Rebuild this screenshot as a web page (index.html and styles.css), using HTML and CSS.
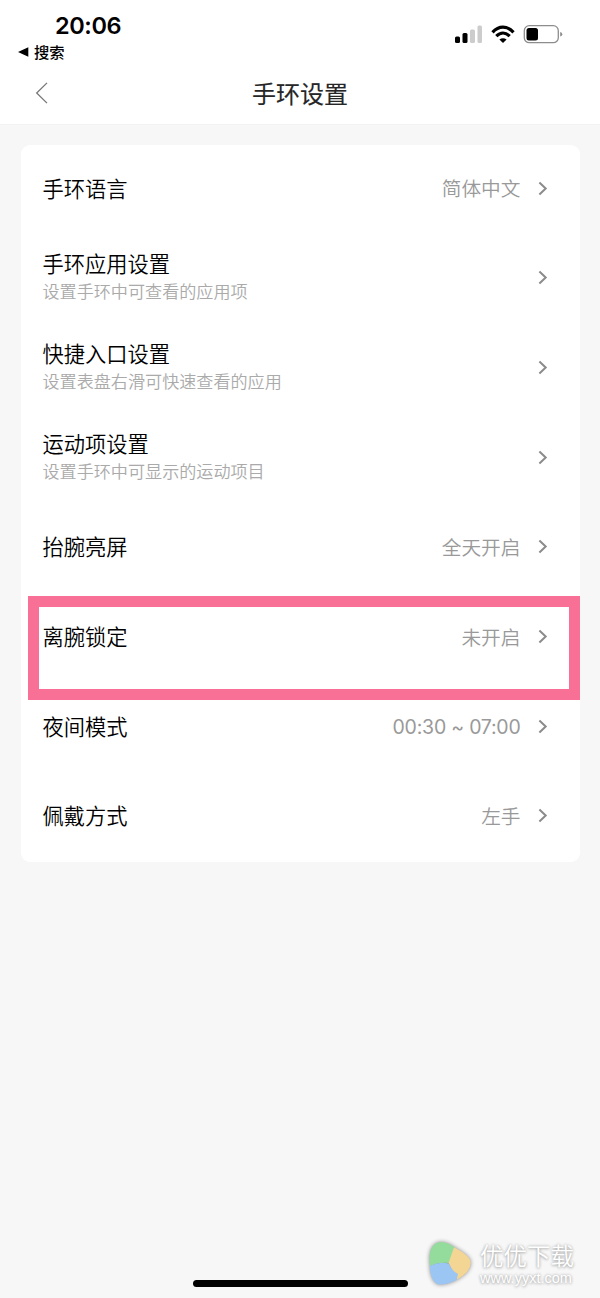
FILE: index.html
```html
<!DOCTYPE html>
<html lang="zh-CN">
<head>
<meta charset="utf-8">
<title>手环设置</title>
<link rel="stylesheet" href="styles.css">
</head>
<body>
<svg class="defs" width="0" height="0"><symbol id="chev" viewBox="0 0 10 15"><path d="M1.4 1.5 7.7 7.5 1.4 13.5" fill="none" stroke="#8b8b8b" stroke-width="2"/></symbol></svg>
<div class="screen">
  <header class="header">
    <div class="status">
      <div class="clock">
        <div class="time">20:06</div>
        <div class="return"><svg width="11" height="10" viewBox="0 0 11 10"><path d="M0 5 10.3 .3V9.7Z"/></svg><span>搜索</span></div>
      </div>
      <svg class="signals" width="110" height="22" viewBox="0 0 110 22">
        <rect x="1" y="12.500" width="5" height="6.500" rx="1.5"/>
        <rect x="8.500" y="9" width="5" height="10" rx="1.5"/>
        <rect x="16" y="5.500" width="5" height="13.500" rx="1.5" fill="#ccc"/>
        <rect x="23.500" y="1.500" width="4.500" height="17.500" rx="1.500" fill="#ccc"/>
        <g fill="none" stroke="#000" stroke-width="3.200"><path d="M38.500 8.300C44.800 1.500 53.200 1.500 59.500 8.300"/><path d="M42.300 12.200C46.500 8.100 51.500 8.100 55.700 12.200"/></g>
        <path d="M45.400 15.500Q49 12.800 52.600 15.500L49 19Z"/>
        <rect x="70.300" y="1.700" width="34" height="17" rx="5" fill="none" stroke="#8d8d8d" stroke-width="1.300"/>
        <rect x="72.500" y="4" width="11.500" height="12.500" rx="2.500"/>
        <path d="M106.200 8Q108.300 8.500 108.300 10.200T106.200 12.500Z" fill="#8d8d8d"/>
      </svg>
    </div>
    <nav class="nav">
      <svg class="back" width="14" height="24" viewBox="0 0 14 24"><path d="M12 1.900 1.700 12 12 22.100" fill="none" stroke="#777" stroke-width="1.300"/></svg>
      <h1 class="title">手环设置</h1>
    </nav>
  </header>
  <main class="card">
    <div class="row"><div class="label">手环语言</div><div class="value">简体中文</div><svg class="arrow"><use href="#chev"/></svg></div>
    <div class="row"><div class="label double">手环应用设置<p class="sub">设置手环中可查看的应用项</p></div><svg class="arrow"><use href="#chev"/></svg></div>
    <div class="row"><div class="label double">快捷入口设置<p class="sub">设置表盘右滑可快速查看的应用</p></div><svg class="arrow"><use href="#chev"/></svg></div>
    <div class="row"><div class="label double">运动项设置<p class="sub">设置手环中可显示的运动项目</p></div><svg class="arrow"><use href="#chev"/></svg></div>
    <div class="row"><div class="label">抬腕亮屏</div><div class="value">全天开启</div><svg class="arrow"><use href="#chev"/></svg></div>
    <div class="row marked"><div class="label">离腕锁定</div><div class="value">未开启</div><svg class="arrow"><use href="#chev"/></svg></div>
    <div class="row"><div class="label">夜间模式</div><div class="value hours">00:30 ~ 07:00</div><svg class="arrow"><use href="#chev"/></svg></div>
    <div class="row"><div class="label">佩戴方式</div><div class="value">左手</div><svg class="arrow"><use href="#chev"/></svg></div>
  </main>
  <div class="home"></div>
  <div class="watermark">
    <svg class="logo" width="48" height="50" viewBox="0 0 48 50">
      <path d="M4 27C2 12 6 3.500 15 3Q22 3 29.500 9L23 24Q13 23 4 27Z" fill="#93dc9b"/>
      <path d="M28 8.300Q45 17 44.700 24Q44.500 33 31 40.500L22.500 24Z" fill="#f3d594"/>
      <path d="M3.700 27Q13 22 23 24.500Q26 32 32 35L30.500 41Q20 46 13 45.500Q5 44 3.700 27Z" fill="#9bc5f2"/>
    </svg>
    <div class="brand"><div class="name">优优下载</div><div class="site">www.yyxt.com</div></div>
  </div>
</div>
</body>
</html>
```
FILE: styles.css
```css
*, *::after { box-sizing: border-box; }
body { margin: 0; background: #f7f7f7; font-family: Inter, "Noto Sans CJK SC", sans-serif; color: #000; }
p, h1 { margin: 0; }
.defs { position: absolute; }
.screen { position: relative; height: 1298px; overflow: hidden; }
.header { height: 124.500px; background: #fff; border-bottom: 1px solid #f2f2f2; }
.status { height: 64px; display: flex; justify-content: space-between; padding: 11px 36px 0 18px; }
.time { margin-left: 37px; font-size: 23.500px; line-height: 30px; font-weight: 600; letter-spacing: -0.400px; }
.return { display: flex; align-items: center; gap: 5px; height: 23px; margin-top: -1px; font-size: 15.300px; font-weight: 500; }
.return span { margin-top: -2px; }
.signals { margin-top: 13px; }
.nav { height: 60px; display: grid; grid-template-columns: 100px 1fr 100px; align-items: center; }
.back { margin: -2px 0 0 35px; }
.title { font-size: 24px; line-height: 36px; font-weight: 400; text-align: center; color: #262626; margin-top: 1px; -webkit-text-stroke: .15px #262626; }
.card { margin: 20px 20.500px 0 21px; height: 717.500px; padding: 0 32px 0 21.500px; border-radius: 9px; background: #fff; }
.row { height: 89.700px; padding-bottom: 2.500px; display: flex; align-items: center; position: relative; }
.label { flex: 1; font-size: 21.250px; line-height: 31px; font-weight: 350; padding-top: 2px; }
.double { line-height: 30px; padding-top: 0; padding-bottom: 2px; }
.sub { font-size: 17.100px; line-height: 25px; color: #aaa; font-weight: 350; }
.value { font-size: 19.700px; line-height: 30px; color: #999; font-weight: 350; padding-top: 2px; }
.hours { font-size: 19.500px; font-weight: 400; letter-spacing: -0.230px; padding-top: 1px; }
.arrow { width: 10px; height: 15px; margin-left: 17px; }
.marked::after { content: ""; position: absolute; left: -14.500px; right: -32.500px; top: 3px; height: 104px; border: 11px solid #f87096; z-index: 1; }
.home { position: absolute; left: 193px; bottom: 11px; width: 215px; height: 7px; border-radius: 4px; background: #000; }
.watermark { position: absolute; left: 426px; top: 1239px; display: flex; gap: 6px; }
.logo { filter: drop-shadow(0 0 2px #888); }
.brand { color: #fff; text-shadow: 0 0 3px #aaa, 0 1px 3px #bbb; padding-top: 4px; }
.name { font-size: 23.500px; line-height: 28px; font-weight: 350; }
.site { font-size: 14.500px; line-height: 14px; font-family: "Liberation Sans", sans-serif; }
```
